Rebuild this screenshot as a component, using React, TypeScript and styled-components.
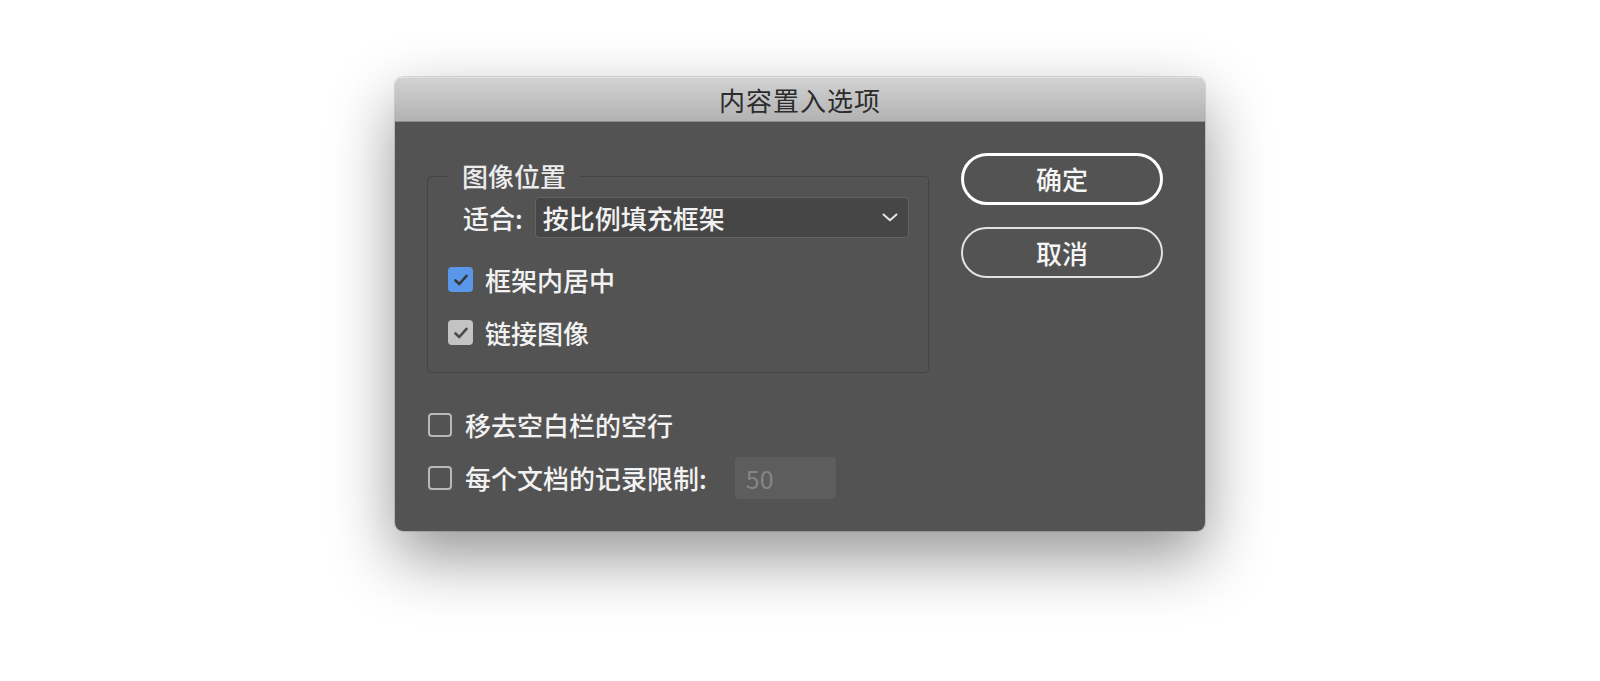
import React from "react";
import styled, { createGlobalStyle } from "styled-components";

const Global = createGlobalStyle`
  html, body { margin: 0; padding: 0; background: #ffffff; }
  body { font-family: "Noto Sans CJK SC", "Noto Sans", sans-serif; }
  * { box-sizing: border-box; }
`;

const Page = styled.div`
  width: 1600px;
  height: 681px;
  padding: 77px 0 0 395px;
  overflow: hidden;
`;

const Dialog = styled.div`
  width: 810px;
  height: 454px;
  border-radius: 8px;
  overflow: hidden;
  display: flex;
  flex-direction: column;
  box-shadow: 0 26px 64px rgba(0, 0, 0, 0.42), 0 0 0 1px rgba(0, 0, 0, 0.12);
`;

const TitleBar = styled.div`
  height: 45px;
  flex: none;
  display: flex;
  align-items: center;
  justify-content: center;
  background: linear-gradient(#d2d2d2, #b2b2b2);
  border-top: 1px solid #e0e0e0;
  border-bottom: 1px solid #8e8e8e;
  color: #2c2c2c;
  font-size: 26px;
  letter-spacing: 1px;
  line-height: 1;
  padding-top: 1px;
`;

const Body = styled.div`
  flex: 1;
  background: #535353;
  display: flex;
  padding: 0 42px 0 32px;
  color: #f2f2f2;
  font-size: 26px;
  font-weight: 500;
  line-height: 1;
`;

const LeftColumn = styled.div`
  width: 502px;
  padding-top: 54px;
  display: flex;
  flex-direction: column;
`;

const RightColumn = styled.div`
  width: 202px;
  margin-left: 32px;
  padding-top: 31px;
  display: flex;
  flex-direction: column;
  gap: 22px;
`;

const Group = styled.div`
  position: relative;
  height: 197px;
  border: 1px solid #444444;
  border-radius: 4px;
  padding: 20px 0 0 20px;
  display: flex;
  flex-direction: column;
`;

const Legend = styled.div`
  position: absolute;
  top: -15px;
  left: 21px;
  padding: 0 13px 0 13px;
  background: #535353;
  color: #ececec;
  font-size: 26px;
  line-height: 28px;
`;

const FitRow = styled.div`
  display: flex;
  align-items: center;
  margin-left: 15px;
  gap: 12px;
  height: 41px;
`;

const Label = styled.span`
  white-space: nowrap;
`;

const Select = styled.div`
  width: 374px;
  height: 41px;
  background: #464646;
  border: 1px solid #636363;
  border-radius: 4px;
  display: flex;
  align-items: center;
  justify-content: space-between;
  padding: 0 10px 0 7px;
`;

const CheckRow = styled.div<{ $top: number }>`
  display: flex;
  align-items: center;
  gap: 12px;
  height: 25px;
  margin-top: ${(p) => p.$top}px;
`;

const Box = styled.span<{ $variant: "blue" | "gray" | "empty"; $size: number }>`
  width: ${(p) => p.$size}px;
  height: ${(p) => p.$size}px;
  flex: none;
  border-radius: 4px;
  display: flex;
  align-items: center;
  justify-content: center;
  background: ${(p) =>
    p.$variant === "blue" ? "#5b97e8" : p.$variant === "gray" ? "#c3c3c3" : "transparent"};
  border: ${(p) => (p.$variant === "empty" ? "2px solid #b8b8b8" : "none")};
`;

const BottomRows = styled.div`
  display: flex;
  flex-direction: column;
  padding-left: 1px;
`;

const BottomRow = styled.div<{ $top: number }>`
  display: flex;
  align-items: center;
  height: 42px;
  margin-top: ${(p) => p.$top}px;
`;

const BottomLabel = styled.div`
  display: flex;
  align-items: center;
  gap: 13px;
`;

const NumberField = styled.div`
  width: 101px;
  height: 42px;
  margin-left: 28px;
  background: #5d5d5d;
  border-radius: 4px;
  color: #858585;
  font-size: 25px;
  font-weight: 400;
  display: flex;
  align-items: center;
  padding-left: 11px;
`;

const Button = styled.div<{ $primary?: boolean }>`
  height: ${(p) => (p.$primary ? 52 : 51)}px;
  border-radius: 26px;
  border: ${(p) => (p.$primary ? "3px solid #ffffff" : "2px solid #e2e2e2")};
  display: flex;
  align-items: center;
  justify-content: center;
  color: #f5f5f5;
  font-size: 26px;
`;

const Check = ({ color }: { color: string }) => (
  <svg width="16" height="14" viewBox="0 0 16 14">
    <path d="M2.5 7.5 L6.3 11 L13.5 2.8" fill="none" stroke={color} strokeWidth="2.6" strokeLinecap="round" strokeLinejoin="round" />
  </svg>
);

const Chevron = () => (
  <svg width="16" height="9" viewBox="0 0 16 9">
    <path d="M1.5 1.5 L8 7.3 L14.5 1.5" fill="none" stroke="#e6e6e6" strokeWidth="2" strokeLinecap="round" strokeLinejoin="round" />
  </svg>
);

export default function App() {
  return (
    <>
      <Global />
      <Page>
        <Dialog>
          <TitleBar>内容置入选项</TitleBar>
          <Body>
            <LeftColumn>
              <Group>
                <Legend>图像位置</Legend>
                <FitRow>
                  <Label>适合:</Label>
                  <Select>
                    <span>按比例填充框架</span>
                    <Chevron />
                  </Select>
                </FitRow>
                <CheckRow $top={29}>
                  <Box $variant="blue" $size={25}>
                    <Check color="#383838" />
                  </Box>
                  <Label>框架内居中</Label>
                </CheckRow>
                <CheckRow $top={28}>
                  <Box $variant="gray" $size={25}>
                    <Check color="#4a4a4a" />
                  </Box>
                  <Label>链接图像</Label>
                </CheckRow>
              </Group>
              <BottomRows>
                <BottomRow $top={31}>
                  <BottomLabel>
                    <Box $variant="empty" $size={24} />
                    <Label>移去空白栏的空行</Label>
                  </BottomLabel>
                </BottomRow>
                <BottomRow $top={11}>
                  <BottomLabel>
                    <Box $variant="empty" $size={24} />
                    <Label>每个文档的记录限制:</Label>
                  </BottomLabel>
                  <NumberField>50</NumberField>
                </BottomRow>
              </BottomRows>
            </LeftColumn>
            <RightColumn>
              <Button $primary>确定</Button>
              <Button>取消</Button>
            </RightColumn>
          </Body>
        </Dialog>
      </Page>
    </>
  );
}
